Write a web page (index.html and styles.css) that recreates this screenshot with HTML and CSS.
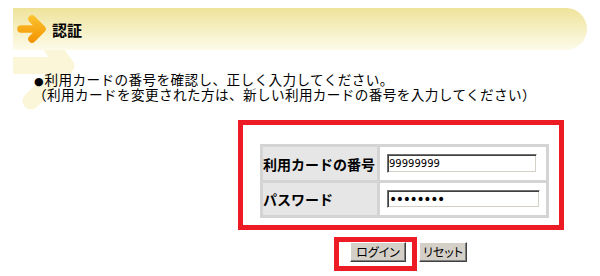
FILE: index.html
```html
<!DOCTYPE html>
<html lang="ja">
<head>
<meta charset="utf-8">
<title>認証</title>
<link rel="stylesheet" href="styles.css">
</head>
<body>
<div class="page">
  <svg class="deco" width="100" height="115" viewBox="0 0 100 115" aria-hidden="true">
    <rect x="13" y="57" width="50" height="17" fill="#fbf6d8"/>
    <polyline points="45,38 66,66 31,101" fill="none" stroke="#fbf6d8" stroke-width="17" stroke-linecap="round" stroke-linejoin="round"/>
  </svg>
  <div class="band">
    <svg class="arrow" width="30" height="28" viewBox="0 0 30 28" aria-hidden="true">
      <defs>
        <linearGradient id="og" gradientUnits="userSpaceOnUse" x1="0" y1="0" x2="0" y2="28">
          <stop offset="0" stop-color="#fcc330"/>
          <stop offset="1" stop-color="#f39200"/>
        </linearGradient>
      </defs>
      <line x1="4" y1="14" x2="22" y2="14" stroke="url(#og)" stroke-width="7.5" stroke-linecap="round"/>
      <polyline points="15,4 25,14 15,24" fill="none" stroke="url(#og)" stroke-width="7.5" stroke-linecap="round" stroke-linejoin="round"/>
    </svg>
    <h1 class="title">認証</h1>
  </div>
  <div class="notice">
    <p class="line"><span class="dot">●</span>利用カードの番号を確認し、正しく入力してください。</p>
    <p class="line">（利用カードを変更された方は、新しい利用カードの番号を入力してください）</p>
  </div>
  <div class="box">
    <table class="auth">
      <tr class="row-first">
        <th>利用カードの番号</th>
        <td><input class="field" type="text" value="99999999"></td>
      </tr>
      <tr>
        <th>パスワード</th>
        <td><input class="field pw" type="password" value="12345678"></td>
      </tr>
    </table>
  </div>
  <div class="buttons">
    <span class="login-wrap"><button class="btn login" type="button">ログイン</button></span>
    <button class="btn reset" type="button">リセット</button>
  </div>
</div>
</body>
</html>
```

FILE: styles.css
```css
html, body {
  margin: 0;
  padding: 0;
  background: #ffffff;
}

body {
  font-family: "Noto Sans CJK JP", "Noto Sans", sans-serif;
  color: #000000;
}

.page {
  position: relative;
  width: 600px;
  height: 276px;
  overflow: hidden;
  padding-top: 8px;
  box-sizing: border-box;
}

.deco {
  position: absolute;
  left: 0;
  top: 0;
  z-index: 0;
}

.band {
  position: relative;
  z-index: 1;
  margin-left: 13px;
  width: 574px;
  height: 42px;
  border-radius: 0 21px 21px 0;
  background: linear-gradient(#efe39a, #fdfbea);
  display: flex;
  align-items: center;
}

.arrow {
  display: block;
  margin-left: 4px;
}

.title {
  margin: 0 0 0 5px;
  font-size: 15px;
  font-weight: bold;
  line-height: 1;
}

.notice {
  position: relative;
  z-index: 1;
  margin: 23px 0 0 33px;
  font-family: "Liberation Sans", "Noto Sans CJK JP", sans-serif;
  font-size: 13.6px;
  letter-spacing: 0.4px;
  line-height: 15px;
  white-space: nowrap;
}

.line {
  margin: 0;
  height: 15px;
}

.dot {
  font-family: "DejaVu Sans", sans-serif;
  font-size: 11px;
  letter-spacing: 0;
  margin-left: 1px;
  margin-right: 1px;
}

.box {
  margin: 17px 0 0 238px;
  width: 326px;
  height: 110px;
  box-sizing: border-box;
  border: 5px solid #ed1c24;
  padding: 19px 0 0 17px;
}

.auth {
  border-collapse: separate;
  border-spacing: 0;
  border: 3px solid #d4d4d4;
  width: 289px;
  height: 74px;
}

.auth th,
.auth td {
  padding: 0;
  vertical-align: middle;
}

.auth th {
  width: 114px;
  background: #e6e6e6;
  border-right: 3px solid #d4d4d4;
  text-align: left;
  font-size: 14px;
  font-weight: bold;
  white-space: nowrap;
}

.auth td {
  width: 166px;
  padding-left: 7px;
  box-sizing: border-box;
}

.row-first th,
.row-first td {
  height: 33px;
  border-bottom: 3px solid #d4d4d4;
}

.field {
  display: block;
  box-sizing: border-box;
  width: 150px;
  height: 19px;
  margin: 0;
  padding: 0 1px;
  border: 1px solid;
  border-color: #707070 #ffffff #ffffff #707070;
  box-shadow: inset 1px 1px 0 #404040, inset -1px -1px 0 #d4d0c8;
  font-family: "DejaVu Sans", sans-serif;
  font-size: 10px;
  color: #000;
  background: #fff;
  outline: none;
}

.field.pw {
  width: 153px;
  height: 18px;
  font-size: 14px;
  letter-spacing: -1.4px;
}

.buttons {
  margin: 12px 0 0 350px;
  display: flex;
  gap: 13px;
}

.login-wrap {
  position: relative;
  display: block;
}

.login-wrap::after {
  content: "";
  position: absolute;
  left: -16px;
  top: -5px;
  width: 83px;
  height: 34px;
  box-sizing: border-box;
  border: 5px solid #ed1c24;
  pointer-events: none;
}

.btn {
  display: block;
  height: 20px;
  box-sizing: border-box;
  margin: 0;
  padding: 0;
  background: #d4d0c8;
  border: 1px solid;
  border-color: #ffffff #404040 #404040 #ffffff;
  box-shadow: inset -1px -1px 0 #808080;
  font-family: "Noto Sans CJK JP", sans-serif;
  font-size: 12px;
  font-feature-settings: "palt";
  line-height: 1;
  color: #000;
}

.login {
  width: 56px;
}

.reset {
  width: 48px;
}
```
